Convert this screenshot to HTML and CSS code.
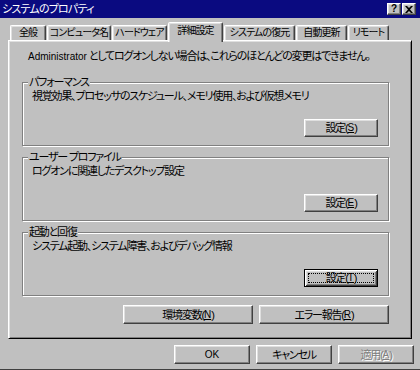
FILE: index.html
```html
<!DOCTYPE html>
<html lang="ja">
<head>
  <meta charset="UTF-8" />
  <title>システムのプロパティ</title>
  <link rel="stylesheet" href="styles.css">
</head>
<body>
  <div class="window">

    <!-- Title bar -->
    <div class="titlebar">
      <span class="title">システムのプロパティ</span>
      <div class="title-buttons">
        <span class="tbtn tbtn-help">?</span>
        <span class="tbtn">
          <svg width="8" height="7" viewBox="0 0 8 7" aria-hidden="true">
            <path d="M0 0h2l2 2 2-2h2L5 3.5 8 7H6L4 5 2 7H0l3-3.5z" fill="#000" />
          </svg>
        </span>
      </div>
    </div>

    <div class="client">
      <!-- Tabs -->
      <div class="tabs">
        <div class="tab tab-general">全般</div>
        <div class="tab tab-computer">コンピュータ名</div>
        <div class="tab tab-hardware">ハードウェア</div>
        <div class="tab tab-advanced active">詳細設定</div>
        <div class="tab tab-restore">システムの復元</div>
        <div class="tab tab-update">自動更新</div>
        <div class="tab tab-remote">リモート</div>
      </div>

      <!-- Advanced page -->
      <div class="panel">
        <p class="note"><span class="latin">Administrator</span> としてログオンしない場合は、これらのほとんどの変更はできません。</p>

        <div class="group">
          <div class="legend">パフォーマンス</div>
          <p class="group-text">視覚効果、プロセッサのスケジュール、メモリ使用、および仮想メモリ</p>
          <div class="group-actions">
            <button class="btn">設定(<u>S</u>)</button>
          </div>
        </div>

        <div class="group">
          <div class="legend">ユーザー プロファイル</div>
          <p class="group-text">ログオンに関連したデスクトップ設定</p>
          <div class="group-actions">
            <button class="btn">設定(<u>E</u>)</button>
          </div>
        </div>

        <div class="group">
          <div class="legend">起動と回復</div>
          <p class="group-text">システム起動、システム障害、およびデバッグ情報</p>
          <div class="group-actions">
            <button class="btn btn-default"><span class="focus">設定(<u>T</u>)</span></button>
          </div>
        </div>

        <div class="panel-actions">
          <button class="btn btn-wide">環境変数(<u>N</u>)</button>
          <button class="btn btn-wide">エラー報告(<u>R</u>)</button>
        </div>
      </div>

      <!-- Dialog buttons -->
      <div class="dialog-actions">
        <button class="btn"><span class="latin">OK</span></button>
        <button class="btn">キャンセル</button>
        <button class="btn" disabled>適用(<u>A</u>)</button>
      </div>
    </div>

  </div>
</body>
</html>
```

FILE: styles.css
```css
/* Reset */
* {
  margin: 0;
  padding: 0;
  box-sizing: border-box;
}

:root {
  --face: #c0c0c0;
  --light: #dfdfdf;
  --shadow: #808080;
  --dark: #404040;
  --title: #0a0a80;
  --ui-font: "Liberation Sans", "Noto Sans CJK JP", sans-serif;
}

html, body {
  width: 420px;
  height: 370px;
  overflow: hidden;
  background: var(--face);
}

body {
  font-family: var(--ui-font);
  font-size: 11px;
  line-height: 12px;
  letter-spacing: -1.2px;
  color: #000;
  font-feature-settings: "palt";
}

.latin {
  font-size: 10px;
  letter-spacing: 0;
}

.btn u {
  font-size: 10px;
  letter-spacing: 0;
}

.window {
  height: 370px;
  display: flex;
  flex-direction: column;
  border-bottom: 1px solid var(--dark);
}

/* Title bar */
.titlebar {
  height: 18px;
  flex: none;
  display: flex;
  align-items: center;
  justify-content: space-between;
  background: var(--title);
  color: #fff;
  padding: 0 4px 0 2px;
}

.title {
  font-size: 11px;
  letter-spacing: -0.8px;
}

.title-buttons {
  display: flex;
  gap: 1px;
}

.tbtn {
  width: 14px;
  height: 12px;
  display: flex;
  align-items: center;
  justify-content: center;
  background: var(--face);
  color: #000;
  border: 1px solid;
  border-color: #fff var(--dark) var(--dark) #fff;
  box-shadow: inset -1px -1px 0 var(--shadow), inset 1px 1px 0 var(--light);
}

.tbtn-help {
  font-family: "Liberation Sans", sans-serif;
  font-weight: bold;
  font-size: 10px;
  line-height: 10px;
  letter-spacing: 0;
}

/* Client area */
.client {
  flex: 1;
  padding: 4px 8px 0 8px;
  display: flex;
  flex-direction: column;
}

/* Tabs */
.tabs {
  display: flex;
  align-items: flex-start;
  gap: 1px;
  height: 20px;
  margin: 0 0 -2px 2px;
}

.tab {
  height: 15px;
  margin-top: 3px;
  display: flex;
  align-items: center;
  justify-content: center;
  border: 1px solid;
  border-bottom: none;
  border-color: #fff var(--dark) transparent #fff;
  border-radius: 2px 2px 0 0;
  box-shadow: inset -1px 0 0 var(--shadow), inset 1px 1px 0 var(--light);
  white-space: nowrap;
  font-size: 10px;
  letter-spacing: -0.9px;
}

.tab-general { width: 36px; }
.tab-computer { width: 64px; }
.tab-hardware { width: 55px; }
.tab-restore { width: 71px; }
.tab-update { width: 51px; }
.tab-remote { width: 41px; }

.tab.active {
  position: relative;
  z-index: 1;
  width: 55px;
  height: 20px;
  margin: 0;
  padding-bottom: 3px;
  background: var(--face);
}

/* Tab page */
.panel {
  height: 299px;
  display: flex;
  flex-direction: column;
  border: 1px solid;
  border-color: #fff #000 #000 #fff;
  box-shadow: inset 1px 1px 0 var(--light), inset -1px -1px 0 var(--shadow);
  padding: 9px 22px 0 13px;
}

.note {
  padding-left: 6px;
  margin-bottom: 19px;
}

/* Group boxes */
.group {
  height: 64px;
  display: flex;
  flex-direction: column;
  border: 1px solid var(--shadow);
  box-shadow: inset 1px 1px 0 #fff, 1px 1px 0 #fff;
  padding: 0 10px 0 9px;
  margin-bottom: 11px;
}

.legend {
  align-self: flex-start;
  margin: -7px 0 0 -4px;
  padding: 0 1px;
  background: var(--face);
}

.group-text {
  margin-top: 2px;
}

.group-actions {
  margin-top: auto;
  margin-bottom: 8px;
  display: flex;
  justify-content: flex-end;
}

/* Buttons */
.btn {
  width: 74px;
  height: 18px;
  display: flex;
  align-items: center;
  justify-content: center;
  font: inherit;
  letter-spacing: inherit;
  color: #000;
  background: var(--face);
  border: 1px solid;
  border-color: #fff var(--dark) var(--dark) #fff;
  box-shadow: inset -1px -1px 0 var(--shadow), inset 1px 1px 0 var(--light);
}

.btn u {
  text-decoration-thickness: 1px;
  text-underline-offset: 1px;
}

.btn-default {
  border: 1px solid #000;
  box-shadow: inset 1px 1px 0 #fff, inset -1px -1px 0 var(--dark), inset 2px 2px 0 var(--light), inset -2px -2px 0 var(--shadow);
  padding: 3px;
}

.focus {
  flex: 1;
  align-self: stretch;
  display: flex;
  align-items: center;
  justify-content: center;
  border: 1px dotted #000;
}

.btn-wide {
  width: 130px;
  height: 19px;
}

.btn:disabled {
  color: var(--shadow);
  text-shadow: 1px 1px 0 #fff;
}

.panel-actions {
  display: flex;
  justify-content: flex-end;
  gap: 6px;
  margin-top: -2px;
}

.dialog-actions {
  display: flex;
  justify-content: flex-end;
  gap: 6px;
  margin: 6px -2px 0 0;
}

.dialog-actions .btn {
  width: 76px;
  height: 19px;
}
```
